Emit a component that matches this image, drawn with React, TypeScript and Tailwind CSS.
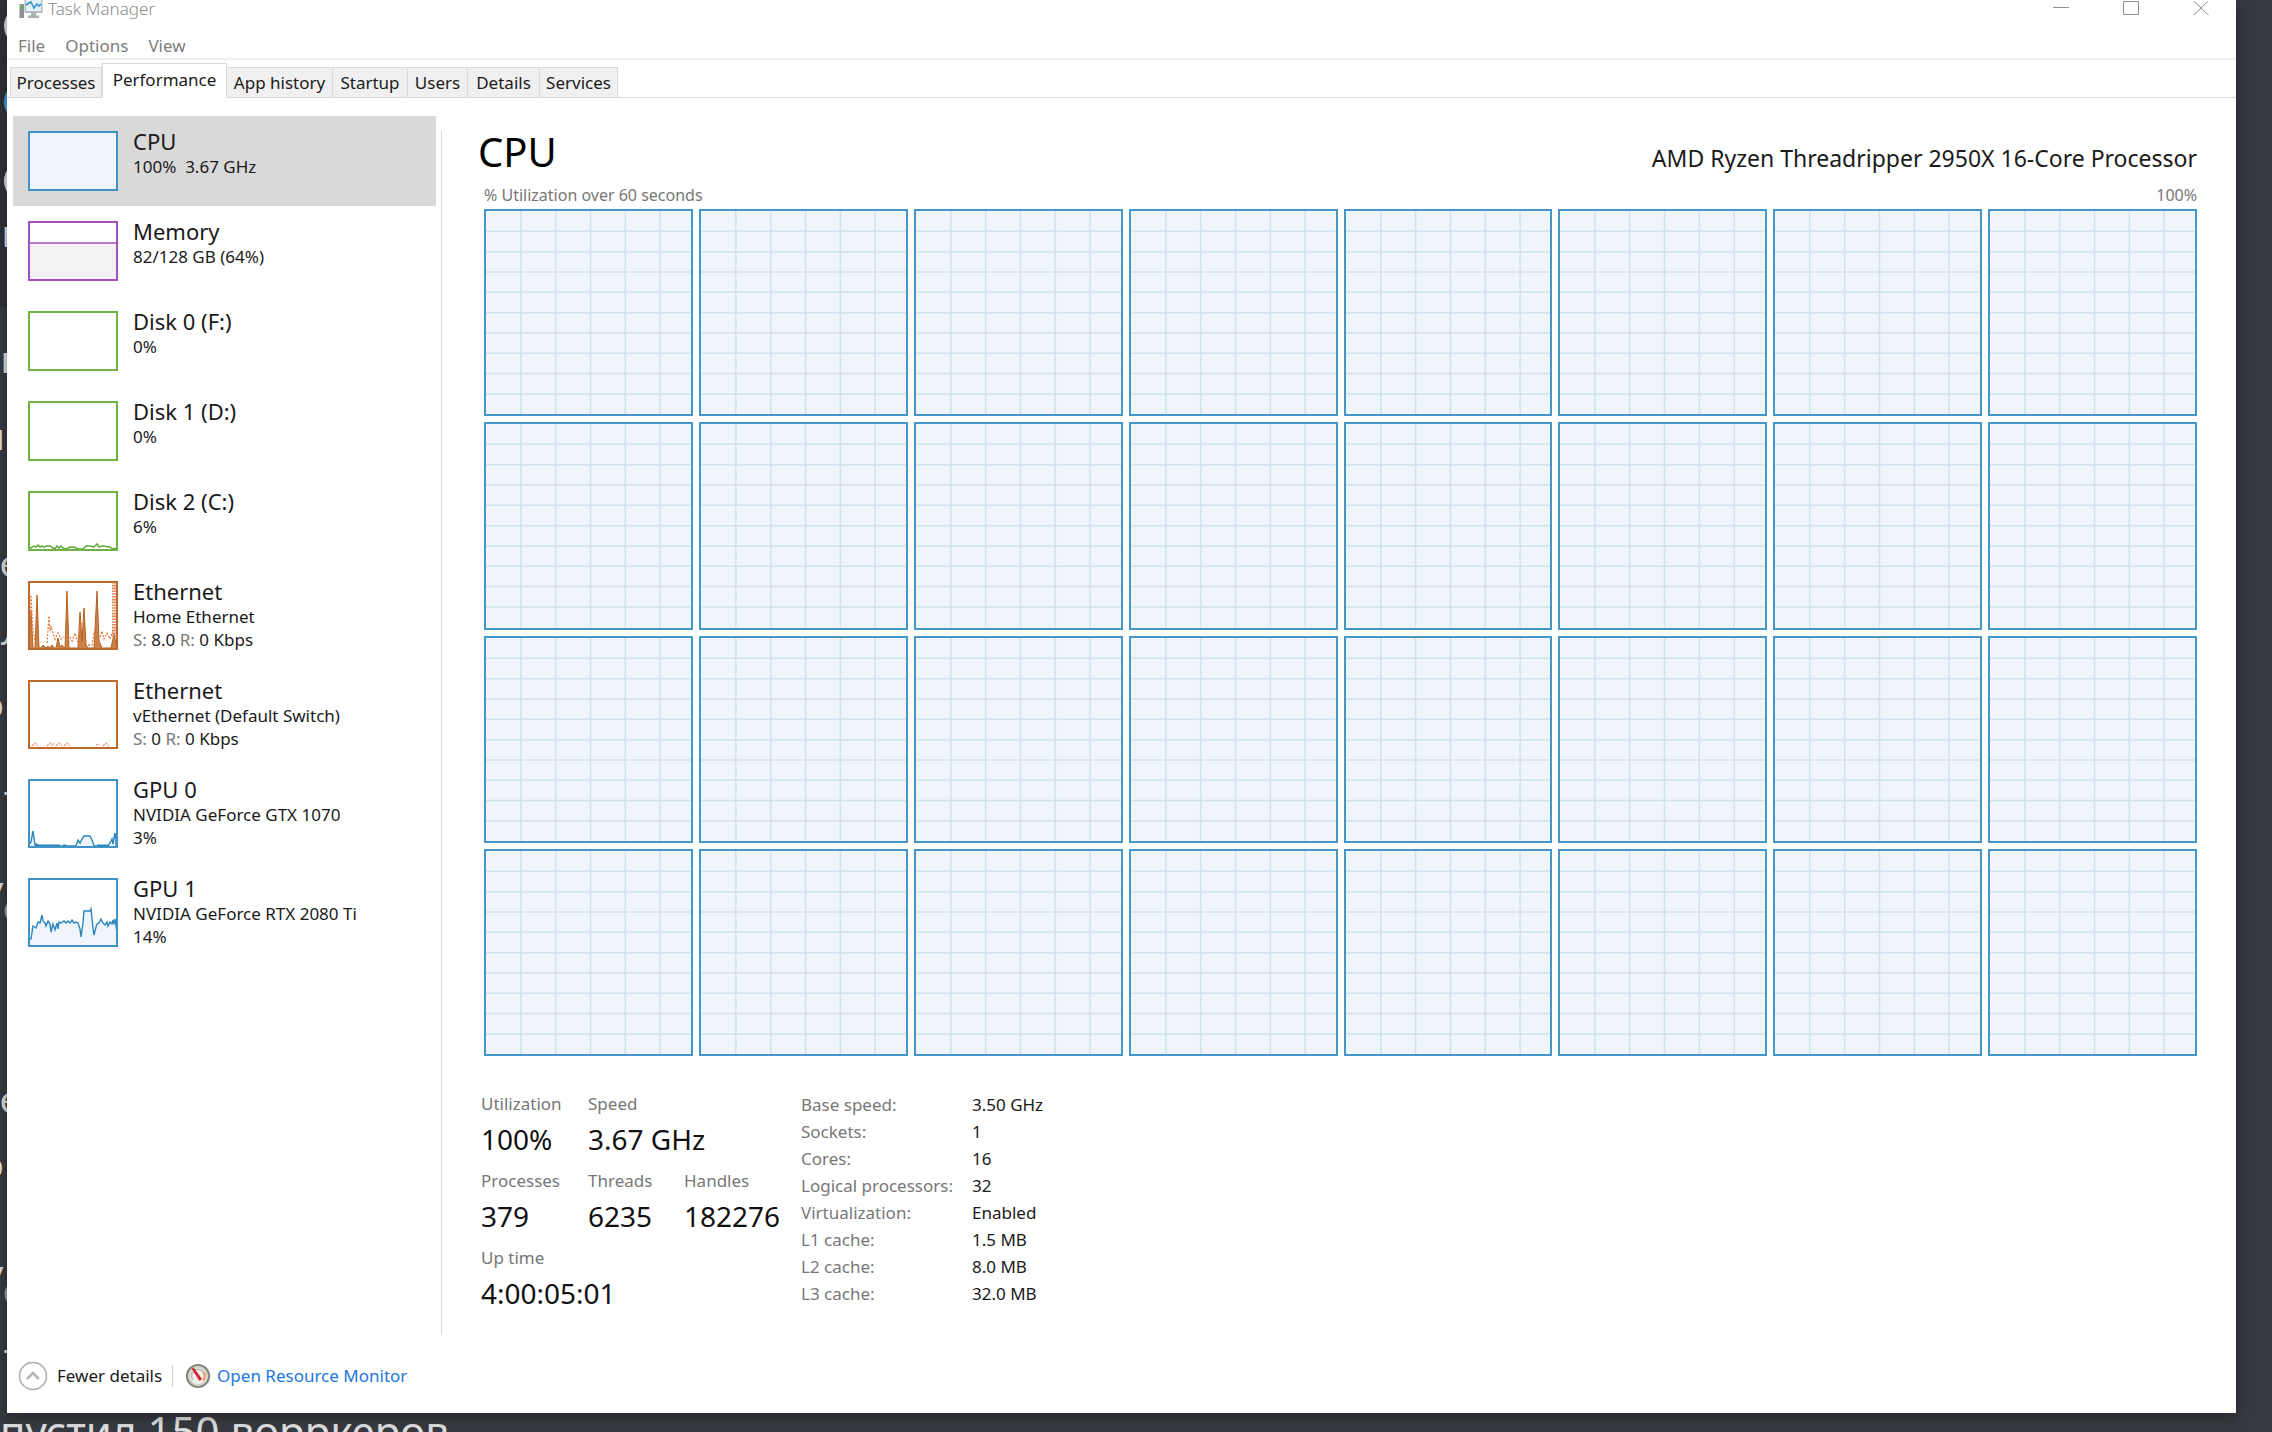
import { ReactNode } from "react";
import clsx from "clsx";

type Resource = {
    id: string;
    name: string;
    lines: ReactNode[];
    frame: string;
    chart?: ReactNode;
};

const TABS = [
    { label: "Processes", width: "w-[92px]" },
    { label: "Performance", width: "w-[125px]" },
    { label: "App history", width: "w-[106px]" },
    { label: "Startup", width: "w-[75px]" },
    { label: "Users", width: "w-[60px]" },
    { label: "Details", width: "w-[72px]" },
    { label: "Services", width: "w-[78px]" },
];

const SPECS = [
    ["Base speed:", "3.50 GHz"],
    ["Sockets:", "1"],
    ["Cores:", "16"],
    ["Logical processors:", "32"],
    ["Virtualization:", "Enabled"],
    ["L1 cache:", "1.5 MB"],
    ["L2 cache:", "8.0 MB"],
    ["L3 cache:", "32.0 MB"],
];

// Chat behind the window, only its left edge sticks out
const CHAT_AVATARS = ["top-[6px] bg-[#dcddde]", "top-[82px] bg-[#3ba0dc]", "top-[161px] bg-[#dcddde]"];

const CHAT_EDGE = [
    { text: "п", place: "top-[208px] left-[2px] text-[#dcddde]" },
    { text: "п", place: "top-[334px] left-[1px] text-[#dcddde]" },
    { text: "п", place: "top-[411px] left-[-17px] text-[#dcddde]" },
    { text: "е", place: "top-[538px] left-0 text-[#dcddde]" },
    { text: "л", place: "top-[606px] left-[1px] text-[#dcddde]" },
    { text: "о", place: "top-[679px] left-[-18px] text-[#dcddde]" },
    { text: "-", place: "top-[766px] left-[2px] text-[#dcddde]" },
    { text: "у", place: "top-[864px] left-[-16px] text-[#dcddde]" },
    { text: "с", place: "top-[882px] left-[3px] text-[#a0a2a6]" },
    { text: "е", place: "top-[1074px] left-0 text-[#dcddde]" },
    { text: "о", place: "top-[1139px] left-[-18px] text-[#dcddde]" },
    { text: "у", place: "top-[1248px] left-[-16px] text-[#dcddde]" },
    { text: "с", place: "top-[1265px] left-[3px] text-[#a0a2a6]" },
    { text: "-", place: "top-[1324px] left-[2px] text-[#dcddde]" },
];

const Rate = ({ sent, received }: { sent: string; received: string }) => (
    <>
        <span className="text-[#777777]">S:</span> {sent} <span className="text-[#777777]">R:</span> {received} Kbps
    </>
);

const RESOURCES: Resource[] = [
    { id: "cpu", name: "CPU", lines: ["100%  3.67 GHz"], frame: "border-[#3f93c6] bg-[#eff5fb]" },
    {
        id: "memory",
        name: "Memory",
        lines: ["82/128 GB (64%)"],
        frame: "border-[#a34fbc] bg-white",
        chart: (
            <svg viewBox="2 2 86 56" className="block size-full">
                <rect x="0" y="22" width="90" height="40" fill="#f4f1f5" />
                <path d="M0 22H90" stroke="#a34fbc" strokeWidth="1.6" />
            </svg>
        ),
    },
    { id: "disk0", name: "Disk 0 (F:)", lines: ["0%"], frame: "border-[#71b445] bg-white" },
    { id: "disk1", name: "Disk 1 (D:)", lines: ["0%"], frame: "border-[#71b445] bg-white" },
    {
        id: "disk2",
        name: "Disk 2 (C:)",
        lines: ["6%"],
        frame: "border-[#71b445] bg-white",
        chart: (
            <svg viewBox="2 2 86 56" className="block size-full">
                <path
                    d="M0 55L3 57 6 55 8 56 10 54 12 56 14 55 16 56 19 55 22 55 25 57 27 58 29 55 31 57 33 55 35 57 38 58 42 56 46 56 50 58 52 58 55 58 58 55 62 55 66 56 69 53 71 56 75 55 82 56 85 58 89 57"
                    fill="none"
                    stroke="#5fa934"
                    strokeWidth="1.5"
                />
            </svg>
        ),
    },
    {
        id: "ethernet",
        name: "Ethernet",
        lines: ["Home Ethernet", <Rate sent="8.0" received="0" />],
        frame: "border-[#bf6a2c] bg-white",
        chart: (
            <svg viewBox="2 2 86 65" className="block size-full">
                <path
                    d="M1 68L3 30 5 67 7 67 9 14 11 67 13 67 15 64 18 67 20 65 22 67 24 64 26 67 28 67 30 57 32 66 34 64 36 67 37 67 39 10 41 67 50 67 52 31 54 60 56 27 58 64 60 67 66 67 69 10 71 60 74 67 83 67 86 53 88 62 89 68Z"
                    fill="#c9824a"
                    stroke="#b9601f"
                    strokeWidth="1"
                />
                <path
                    d="M2 62L3 14 5 50 7 60M19 62L21 35 22 50 23 45 25 52 27 58 30 52 33 58 36 56M42 56L44 60 47 52 50 62 52 45 56 40M60 64L64 64 66 52 68 58M72 56L74 50 76 58 79 52 82 58 85 50"
                    fill="none"
                    stroke="#e0804c"
                    strokeWidth="1.3"
                    strokeDasharray="2 1.5"
                />
                <path d="M86 1V56" stroke="#e08a5c" strokeWidth="4" strokeDasharray="1.6 1.2" />
            </svg>
        ),
    },
    {
        id: "vethernet",
        name: "Ethernet",
        lines: ["vEthernet (Default Switch)", <Rate sent="0" received="0" />],
        frame: "border-[#bf6a2c] bg-white",
        chart: (
            <svg viewBox="2 2 86 65" className="block size-full">
                <path
                    d="M4 66L7 63 10 66M19 66L22 63 24 66M25 63V66M28 66L31 63 34 66M36 66L39 63 42 66M68 64.500H72M75 66L78 63 81 66"
                    fill="none"
                    stroke="#e59a72"
                    strokeWidth="1.2"
                    strokeDasharray="2.500 1"
                />
            </svg>
        ),
    },
    {
        id: "gpu0",
        name: "GPU 0",
        lines: ["NVIDIA GeForce GTX 1070", "3%"],
        frame: "border-[#3f93c6] bg-white",
        chart: (
            <svg viewBox="2 2 86 65" className="block size-full">
                <path
                    d="M0 67L3 63 5 52 7 66 9 65 11 67H48L50 61 52 64 54 60 56 57H62L64 61 66 67H80L83 62 84 60 85 65 87 54 88 60 88 67"
                    fill="#eff5fb"
                    stroke="#2a86bd"
                    strokeWidth="1.4"
                />
                <path d="M7 66.500H32M35 66.500H38M69 66.500H81" stroke="#2a86bd" strokeWidth="2" />
            </svg>
        ),
    },
    {
        id: "gpu1",
        name: "GPU 1",
        lines: ["NVIDIA GeForce RTX 2080 Ti", "14%"],
        frame: "border-[#3f93c6] bg-white",
        chart: (
            <svg viewBox="2 2 86 65" className="block size-full">
                <path
                    d="M-1 70V60L3 61 5 48 8 50 10 44 12 45 14 37 15 43 17 45 18 48 20 43 22 46 23 54 25 46 27 52 29 45 30 51 31 44 33 45 36 43 38 45 40 43 42 45 44 42 46 45 48 44 50 45 52 51 53 59 55 45 56 33H62L63 31 65 50 66 57 68 49 69 46 71 45 73 41 75 45 77 47 79 44 80 48 82 44 84 46 85 42 86 46 87 41 89 55V70Z"
                    fill="#eff5fb"
                    stroke="#2a86bd"
                    strokeWidth="1.4"
                />
            </svg>
        ),
    },
];

const AppIcon = () => (
    <svg viewBox="0 0 24 20" className="h-5 w-6 shrink-0">
        <rect x="0.500" y="5" width="4.500" height="14" fill="#8d9190" />
        <rect x="1.500" y="6.500" width="2.500" height="4" fill="#5cae4b" />
        <rect x="5.500" y="0" width="18" height="14" fill="#b4babd" />
        <rect x="7" y="0" width="15" height="12" fill="#dff1fb" />
        <path d="M7 6L10 4 12 3 15 9 18 5 20 7 22 5" fill="none" stroke="#3d93cf" strokeWidth="1.6" />
        <path d="M12 14H17V16.500H20V19H9V16.500H12Z" fill="#a9afb2" />
    </svg>
);

const MonitorIcon = () => (
    <svg viewBox="0 0 26 26" className="size-[26px] shrink-0">
        <circle cx="13" cy="13" r="11" fill="#f0eeea" stroke="#85857f" strokeWidth="2.200" />
        <circle cx="13" cy="13" r="9" fill="none" stroke="#d2d0c8" strokeWidth="1.500" />
        <path d="M8 17A6.500 6.500 0 1 1 18 17" fill="none" stroke="#b9b7ae" strokeWidth="1.500" />
        <path d="M18.500 9A7 7 0 0 1 18 17.500" fill="none" stroke="#ee9150" strokeWidth="1.800" />
        <path d="M6.500 5.500L9 5 17 16 14.500 18Z" fill="#d3202b" />
    </svg>
);

// One graph per logical processor
const CoreGraph = () => (
    <div className="min-w-0 border-2 border-[#4497c8] bg-[#eff5fa]">
        <svg className="block size-full" stroke="#cfe2ed" strokeWidth="1.5">
            {[1, 2, 3, 4, 5].map((n) => (
                <line key={n} x1={`${n * 17}%`} x2={`${n * 17}%`} y1="0" y2="100%" />
            ))}
            {[1, 2, 3, 4, 5, 6, 7, 8, 9].map((n) => (
                <line key={n} x1="0" x2="100%" y1={`${n * 10}%`} y2={`${n * 10}%`} />
            ))}
        </svg>
    </div>
);

const Stat = ({ label, value, className }: { label: string; value: string; className?: string }) => (
    <div className={className}>
        <dt className="text-[17px] leading-[26px] text-[#777777]">{label}</dt>
        <dd className="text-[28px] leading-[44px] text-[#111111]">{value}</dd>
    </div>
);

const App = () => {
    return (
        <div className="relative flex h-screen flex-col overflow-hidden bg-[#36393f] font-['Noto_Sans','Open_Sans',sans-serif]">
            {/* Chat in the background */}
            <div className="absolute inset-y-0 left-0 w-2 overflow-hidden font-[Lato,sans-serif] text-[38px] leading-[48px]">
                <div className="h-[307px] bg-[#2f3136]" />
                {CHAT_AVATARS.map((look) => (
                    <div key={look} className={clsx("absolute left-1 size-10 rounded-full", look)} />
                ))}
                {CHAT_EDGE.map(({ text, place }) => (
                    <span key={place} className={clsx("absolute", place)}>
                        {text}
                    </span>
                ))}
            </div>

            {/* Task Manager window */}
            <div className="relative mr-9 ml-[7px] flex min-h-0 flex-1 flex-col bg-white text-[17px] text-[#1a1a1a] shadow-[0_4px_12px_rgba(0,0,0,0.35)]">
                <header className="flex h-[18px] items-center justify-between">
                    <div className="flex items-center gap-[5px] pl-3 text-[#8c8c8c]">
                        <AppIcon />
                        <h1 className="leading-[18px] font-light">Task Manager</h1>
                    </div>
                    <div className="flex text-[#8f8f8f]">
                        <button aria-label="Minimize" className="flex w-[70px] justify-center">
                            <svg viewBox="0 0 16 16" className="size-4" fill="none" stroke="currentColor">
                                <path d="M0 6.500H16" />
                            </svg>
                        </button>
                        <button aria-label="Maximize" className="flex w-[70px] justify-center">
                            <svg viewBox="0 0 16 16" className="size-4" fill="none" stroke="currentColor">
                                <path d="M0.500 0.500H15.500V13.500H0.500Z" />
                            </svg>
                        </button>
                        <button aria-label="Close" className="flex w-[70px] justify-center">
                            <svg viewBox="0 0 16 16" className="size-4" fill="none" stroke="currentColor">
                                <path d="M0.500 0L15.500 14M15.500 0L0.500 14" />
                            </svg>
                        </button>
                    </div>
                </header>

                <nav className="mt-4 flex h-[26px] shrink-0 items-center gap-5 border-b-2 border-[#f0f0f0] pl-[11px] text-[#7d7d7d]">
                    <button>File</button>
                    <button>Options</button>
                    <button>View</button>
                </nav>

                <div role="tablist" className="flex h-[38px] shrink-0 items-end border-b border-[#d9d9d9] pl-[3px]">
                    {TABS.map(({ label, width }) => {
                        const selected = label === "Performance";
                        return (
                            <button
                                key={label}
                                role="tab"
                                aria-selected={selected}
                                className={clsx(
                                    "-mb-px border border-[#d9d9d9] whitespace-nowrap",
                                    width,
                                    selected ? "h-[35px] border-b-white bg-white pb-0.5" : "h-[31px] border-l-0 bg-[#f0f0f0] first:border-l",
                                )}
                            >
                                {label}
                            </button>
                        );
                    })}
                </div>

                <div className="flex min-h-0 flex-1">
                    {/* Resource list */}
                    <aside className="w-[429px] shrink-0 pt-[18px] pl-[6px]">
                        {RESOURCES.map(({ id, name, lines, frame, chart }) => (
                            <button
                                key={id}
                                className={clsx(
                                    "flex w-full items-start gap-[15px] pl-[15px] text-left",
                                    lines.length > 1 ? "h-[99px]" : "h-[90px]",
                                    id === "cpu" && "bg-[#d9d9d9]",
                                )}
                            >
                                <span
                                    className={clsx(
                                        "mt-[15px] w-[90px] shrink-0 overflow-hidden border-2",
                                        lines.length > 1 ? "h-[69px]" : "h-[60px]",
                                        frame,
                                    )}
                                >
                                    {chart}
                                </span>
                                <span className="flex flex-col pt-[11px] whitespace-pre">
                                    <span className="text-[22px] leading-7">{name}</span>
                                    {lines.map((line, i) => (
                                        <span key={i} className="leading-[23px]">
                                            {line}
                                        </span>
                                    ))}
                                </span>
                            </button>
                        ))}
                    </aside>

                    <div className="mt-[33px] ml-[5px] w-px shrink-0 bg-[#d9d9d9]" />

                    {/* CPU details */}
                    <main className="flex min-w-0 flex-1 flex-col pt-6 pr-[39px] pl-[36px]">
                        <div className="flex items-baseline justify-between">
                            <h2 className="text-[40px] leading-[60px] text-black">CPU</h2>
                            <p className="text-[23px]">AMD Ryzen Threadripper 2950X 16-Core Processor</p>
                        </div>
                        <div className="flex justify-between pl-[6px] text-[16px] leading-[27px] text-[#777777]">
                            <span>% Utilization over 60 seconds</span>
                            <span>100%</span>
                        </div>
                        <div className="ml-[6px] grid min-h-0 flex-1 grid-cols-8 grid-rows-4 gap-[6px]">
                            {Array.from({ length: 32 }, (_, i) => (
                                <CoreGraph key={i} />
                            ))}
                        </div>

                        <div className="mt-[35px] mb-5 ml-[3px] flex">
                            <dl className="grid w-[320px] grid-cols-[107px_96px_1fr] gap-y-[7px]">
                                <Stat label="Utilization" value="100%" />
                                <Stat label="Speed" value="3.67 GHz" className="col-span-2" />
                                <Stat label="Processes" value="379" />
                                <Stat label="Threads" value="6235" />
                                <Stat label="Handles" value="182276" />
                                <Stat label="Up time" value="4:00:05:01" className="col-span-3" />
                            </dl>
                            <table className="self-start text-left leading-[27px]">
                                <tbody>
                                    {SPECS.map(([label, value]) => (
                                        <tr key={label}>
                                            <th scope="row" className="w-[171px] font-normal whitespace-nowrap text-[#777777]">
                                                {label}
                                            </th>
                                            <td>{value}</td>
                                        </tr>
                                    ))}
                                </tbody>
                            </table>
                        </div>
                    </main>
                </div>

                <footer className="flex h-[78px] shrink-0 items-center pt-1 pl-[11px]">
                    <button className="flex items-center gap-[9px]">
                        <svg viewBox="0 0 30 30" className="size-[30px]" fill="none">
                            <circle cx="15" cy="15" r="13.500" stroke="#ababab" strokeWidth="1.500" />
                            <path d="M9 18L15 12 21 18" stroke="#b5b5b5" strokeWidth="2.500" />
                        </svg>
                        Fewer details
                    </button>
                    <span className="mr-3 ml-[10px] h-[22px] w-px bg-[#d0d0d0]" />
                    <a href="#resmon" className="flex items-center gap-[6px] text-[#2277dd]">
                        <MonitorIcon />
                        Open Resource Monitor
                    </a>
                </footer>
            </div>

            <p className="h-[19px] shrink-0 overflow-hidden text-[42px] leading-9 whitespace-nowrap text-[#dcddde]">
                пустил 150 ворркеров
            </p>
        </div>
    );
};

export default App;
